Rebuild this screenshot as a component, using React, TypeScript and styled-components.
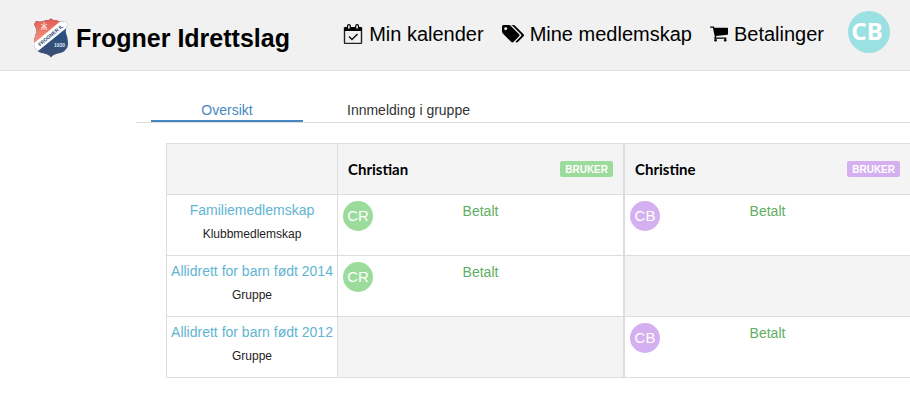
import React from 'react';
import styled, { createGlobalStyle } from 'styled-components';

const GlobalStyle = createGlobalStyle`
  *, *::before, *::after { box-sizing: border-box; }
  body {
    margin: 0;
    background: #fff;
    color: #333;
    font-family: "Liberation Sans", Arial, sans-serif;
    font-size: 14px;
    line-height: 20px;
  }
`;

const GREEN = '#9bdb9b';
const PURPLE = '#d5b0f0';
const BORDER = '#ddd';

const Header = styled.header`
  display: flex;
  align-items: center;
  min-height: 71px;
  padding: 0 20px 6px 33px;
  background: #f1f1f1;
  border-bottom: 1px solid ${BORDER};
`;

const Brand = styled.a`
  display: flex;
  align-items: center;
  gap: 6px;
  margin-top: 12px;
  color: #000;
  font-size: 25px;
  font-weight: bold;
  line-height: 30px;
  white-space: nowrap;
  text-decoration: none;
`;

const Nav = styled.nav`
  display: flex;
  align-items: center;
  gap: 18px;
  margin: 4px 24px 0 auto;
`;

const NavLink = styled.a`
  display: flex;
  align-items: center;
  gap: 6px;
  color: #000;
  font-size: 20px;
  line-height: 24px;
  white-space: nowrap;
  text-decoration: none;

  svg { flex: none; }
`;

const ProfileButton = styled.button`
  flex: none;
  width: 42px;
  height: 42px;
  padding: 0 4px 2px 0;
  border: 0;
  border-radius: 50%;
  background: #9be0e3;
  color: #fff;
  font: bold 24px/40px "Noto Sans", sans-serif;
  cursor: pointer;
`;

const Main = styled.main`
  margin: 29px 0 0 136px;
`;

const TabBar = styled.div`
  display: flex;
  padding-left: 15px;
  border-bottom: 1px solid ${BORDER};
`;

const Tab = styled.button<{ $active?: boolean }>`
  min-width: 152px;
  height: 22px;
  padding: 0 44px;
  border: 0;
  border-bottom: 2px solid ${p => (p.$active ? '#4887bf' : 'transparent')};
  background: none;
  color: ${p => (p.$active ? '#4887bf' : '#333')};
  font: inherit;
  white-space: nowrap;
  cursor: pointer;
`;

const TableArea = styled.div`
  padding: 20px 0 28px 30px;
`;

const Table = styled.table`
  width: 100%;
  table-layout: fixed;
  border-spacing: 0;
  border-top: 1px solid ${BORDER};
  border-left: 1px solid ${BORDER};
`;

const GroupColumn = styled.col`
  width: 171px;
`;

const Cell = styled.td<{ $empty?: boolean }>`
  height: 61px;
  padding: 6px 5px;
  border-bottom: 1px solid ${BORDER};
  background: ${p => (p.$empty ? '#f4f4f4' : '#fff')};
  vertical-align: top;

  &:nth-child(2) { border-right: 1px solid ${BORDER}; }
  &:last-child { border-left: 1px solid ${BORDER}; }
`;

const HeadCell = styled(Cell)`
  height: 51px;
  padding: 0 10px;
  background: #f4f4f4;
  vertical-align: middle;

  &:first-child { border-right: 1px solid ${BORDER}; }
`;

const GroupCell = styled(Cell)`
  padding: 5px 0;
  border-right: 1px solid ${BORDER};
  font-weight: normal;
  text-align: center;
`;

const GroupLink = styled.a`
  display: block;
  color: #62b4d3;
  white-space: nowrap;
  text-decoration: none;
`;

const GroupType = styled.span`
  display: block;
  padding-top: 4px;
  color: #222;
  font-size: 12px;
`;

const Member = styled.div`
  display: flex;
  align-items: center;
  justify-content: space-between;
  color: #000;
  font: bold 15px/20px Lato, sans-serif;
`;

const Badge = styled.span<{ $color: string }>`
  padding: 1px 5px 0;
  border-radius: 2px;
  background: ${p => p.$color};
  color: #fff;
  font: bold 10px/15px "Liberation Sans", Arial, sans-serif;
`;

const Status = styled.div`
  display: grid;
  grid-template-columns: 30px 1fr 30px;
`;

const Initials = styled.span<{ $color: string }>`
  height: 30px;
  border-radius: 50%;
  background: ${p => p.$color};
  color: #fff;
  font-size: 15px;
  line-height: 30px;
  text-align: center;
`;

const Paid = styled.span`
  color: #5fae62;
  text-align: center;
`;

const ClubCrest = () => (
  <svg width="37" height="40" viewBox="0 0 37 40" aria-hidden="true">
    <defs>
      <clipPath id="crest">
        <path d="M3 3 Q8 4.500 12 2.500 Q16 2.500 18 0.500 Q20 2.500 24 2.500 Q28 4.500 33 3 L35 6.500 Q32 10 33 15 Q36 23 34.500 29 Q32 34.500 25 35.500 Q20 36.500 18 39.500 Q16 36.500 11 35.500 Q4 34.500 1.500 29 Q0 23 3 15 Q4 10 1 6.500 Z" />
      </clipPath>
      <linearGradient id="red" x1="0" y1="0" x2="0" y2="1">
        <stop offset="0" stopColor="#e2594f" />
        <stop offset="1" stopColor="#f59d8c" />
      </linearGradient>
      <linearGradient id="blue" x1="0" y1="0" x2="0" y2="1">
        <stop offset="0" stopColor="#174f86" />
        <stop offset="1" stopColor="#3f4f74" />
      </linearGradient>
    </defs>
    <g clipPath="url(#crest)">
      <rect width="37" height="40" fill="url(#blue)" />
      <path d="M0 0H32L0 27Z" fill="url(#red)" />
      <path d="M0 26L30 1L37 3V7L5 33L0 31Z" fill="#fff" />
      <path d="M11 4v8M8 6l6 4M14 6l-6 4M8 12l3-4 3 4" stroke="#fde0d8" strokeWidth="1" fill="none" />
      <text transform="translate(7 28.500) rotate(-40)" fontSize="5" fontWeight="bold" fill="#24466f">FROGNER IL</text>
      <text x="21" y="29" fontSize="5" fontWeight="bold" fill="#dce6f0">1930</text>
    </g>
  </svg>
);

const CalendarIcon = () => (
  <svg width="20" height="20" viewBox="0 0 20 20" aria-hidden="true">
    <path d="M1.500 4h17v14.500a1 1 0 0 1-1 1h-15a1 1 0 0 1-1-1z" fill="none" stroke="#222" strokeWidth="1.400" />
    <path d="M1 7V4.500Q1 3 2.500 3h15Q19 3 19 4.500V7z" />
    <rect x="4.500" y="0.600" width="2.800" height="4.800" rx="1.400" fill="#f1f1f1" stroke="#000" strokeWidth="1.200" />
    <rect x="12.700" y="0.600" width="2.800" height="4.800" rx="1.400" fill="#f1f1f1" stroke="#000" strokeWidth="1.200" />
    <path d="M6 12.500l3 3 5.500-5.500" fill="none" stroke="#111" strokeWidth="1.500" />
  </svg>
);

const TagsIcon = () => (
  <svg width="22" height="18" viewBox="0 160 1900 1500" aria-hidden="true">
    <path d="M448 448q0-53-37.500-90.500t-90.500-37.500-90.500 37.500-37.500 90.500 37.500 90.500 90.500 37.500 90.500-37.500 37.500-90.500zm1067 576q0 53-37 90l-491 492q-39 37-91 37-53 0-90-37l-715-716q-38-37-64.500-101t-26.500-117v-416q0-52 38-90t90-38h416q53 0 117 26.500t102 64.500l715 714q37 39 37 91zm384 0q0 53-37 90l-491 492q-39 37-91 37-36 0-59-14t-53-45l470-470q37-37 37-90 0-52-37-91l-715-714q-38-38-102-64.500t-117-26.500h224q53 0 117 26.500t102 64.500l715 714q37 39 37 91z" />
  </svg>
);

const CartIcon = () => (
  <svg width="18" height="16" viewBox="64 240 1664 1440" aria-hidden="true">
    <path d="M704 1536q0 52-38 90t-90 38-90-38-38-90 38-90 90-38 90 38 38 90zm896 0q0 52-38 90t-90 38-90-38-38-90 38-90 90-38 90 38 38 90zm128-1088v512q0 24-16.500 42.500t-40.500 21.500l-1044 122q13 60 13 70 0 16-24 64h920q26 0 45 19t19 45-19 45-45 19h-1024q-26 0-45-19t-19-45q0-11 8-31.500t16-36 21.500-40 15.500-29.500l-177-823h-204q-26 0-45-19t-19-45 19-45 45-19h256q16 0 28.500 6.500t19.500 15.500 13 24.500 8 26 5.500 29.500 4.500 26h1201q26 0 45 19t19 45z" />
  </svg>
);

const members = [
  { name: 'Christian', initials: 'CR', color: GREEN },
  { name: 'Christine', initials: 'CB', color: PURPLE },
];

const groups = [
  { name: 'Familiemedlemskap', type: 'Klubbmedlemskap', paid: [true, true] },
  { name: 'Allidrett for barn født 2014', type: 'Gruppe', paid: [true, false] },
  { name: 'Allidrett for barn født 2012', type: 'Gruppe', paid: [false, true] },
];

export default function App() {
  return (
    <>
      <GlobalStyle />
      <Header>
        <Brand href="#"><ClubCrest />Frogner Idrettslag</Brand>
        <Nav>
          <NavLink href="#"><CalendarIcon />Min kalender</NavLink>
          <NavLink href="#"><TagsIcon />Mine medlemskap</NavLink>
          <NavLink href="#"><CartIcon />Betalinger</NavLink>
        </Nav>
        <ProfileButton type="button">CB</ProfileButton>
      </Header>
      <Main>
        <TabBar role="tablist">
          <Tab type="button" role="tab" aria-selected="true" $active>Oversikt</Tab>
          <Tab type="button" role="tab" aria-selected="false">Innmelding i gruppe</Tab>
        </TabBar>
        <TableArea>
          <Table>
            <colgroup>
              <GroupColumn />
              <col />
              <col />
            </colgroup>
            <thead>
              <tr>
                <HeadCell />
                {members.map(m => (
                  <HeadCell as="th" scope="col" key={m.name}>
                    <Member>{m.name}<Badge $color={m.color}>BRUKER</Badge></Member>
                  </HeadCell>
                ))}
              </tr>
            </thead>
            <tbody>
              {groups.map(g => (
                <tr key={g.name}>
                  <GroupCell as="th" scope="row">
                    <GroupLink href="#">{g.name}</GroupLink>
                    <GroupType>{g.type}</GroupType>
                  </GroupCell>
                  {members.map((m, i) => (
                    <Cell key={m.name} $empty={!g.paid[i]}>
                      {g.paid[i] && (
                        <Status>
                          <Initials $color={m.color}>{m.initials}</Initials>
                          <Paid>Betalt</Paid>
                        </Status>
                      )}
                    </Cell>
                  ))}
                </tr>
              ))}
            </tbody>
          </Table>
        </TableArea>
      </Main>
    </>
  );
}
